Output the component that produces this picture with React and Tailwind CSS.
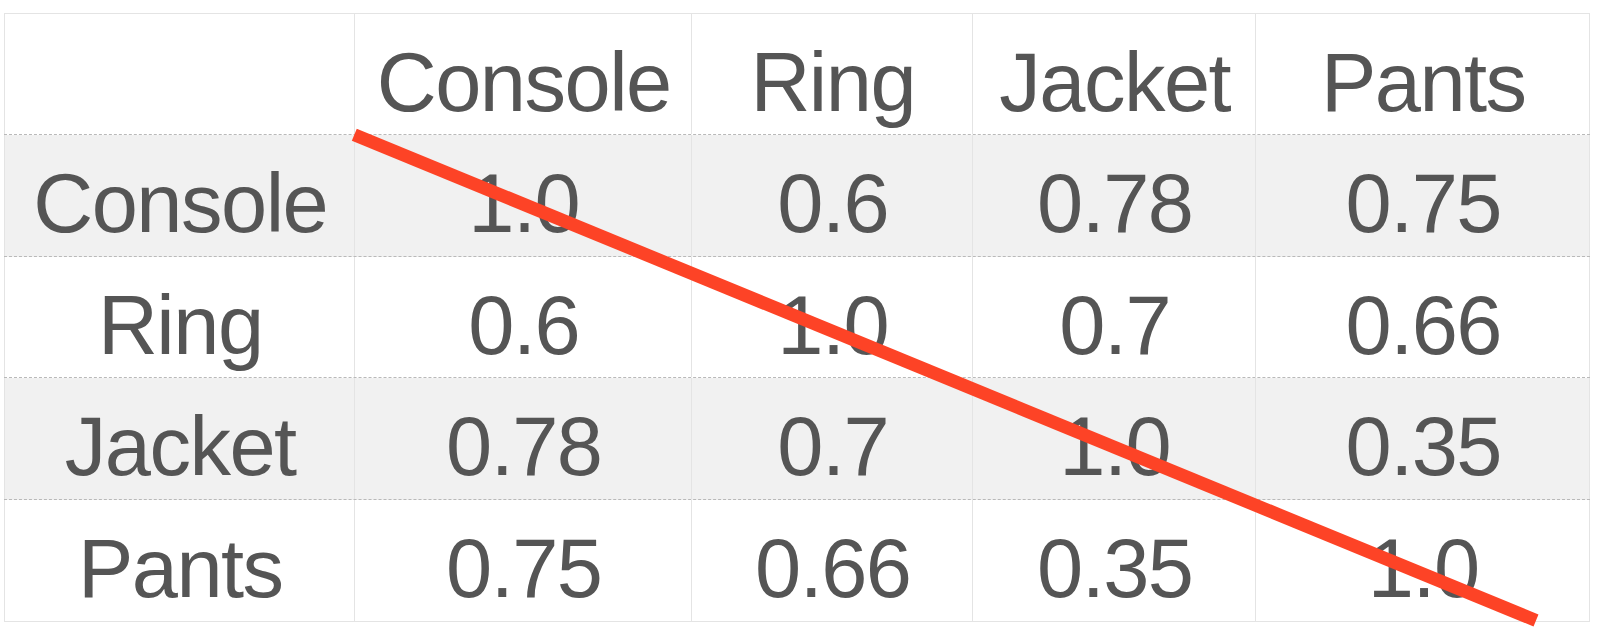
const cols = ["Console", "Ring", "Jacket", "Pants"];
const widths = ["w-[351px] border-l", "w-[337px]", "w-[281px]", "w-[283px]", "w-[334px]"];

const rows = [
  { label: "", cells: cols, h: "h-[121px]", bg: "bg-white" },
  { label: "Console", cells: ["1.0", "0.6", "0.78", "0.75"], h: "h-[122px]", bg: "bg-[#f1f1f1]" },
  { label: "Ring", cells: ["0.6", "1.0", "0.7", "0.66"], h: "h-[121px]", bg: "bg-white" },
  { label: "Jacket", cells: ["0.78", "0.7", "1.0", "0.35"], h: "h-[122px]", bg: "bg-[#f1f1f1]" },
  { label: "Pants", cells: ["0.75", "0.66", "0.35", "1.0"], h: "h-[122px]", bg: "bg-white" },
];

function Cell({ text, width }) {
  return (
    <div
      className={`${width} h-full shrink-0 border-r border-[#e4e4e4] flex justify-center items-start pt-[27px] pl-[1.5px]`}
    >
      <span className="text-[83px] leading-[83px] tracking-[-1.5px] text-[#555555]">
        {text}
      </span>
    </div>
  );
}

export default function App() {
  return (
    <div
      className="relative w-[1600px] h-[631px] bg-white overflow-hidden"
      style={{ fontFamily: '"Liberation Sans", Arial, sans-serif' }}
    >
      <div className="ml-[4px] pt-[13px]">
        <div className="w-[1586px] border-t border-[#e4e4e4]">
          {rows.map((row, i) => (
            <div
              key={i}
              className={`${row.h} ${row.bg} flex box-border border-b ${
                i === rows.length - 1
                  ? "border-solid border-[#e4e4e4]"
                  : "border-dashed border-[#b9b9b9]"
              }`}
            >
              <Cell text={row.label} width={widths[0]} />
              {row.cells.map((c, j) => (
                <Cell key={j} text={c} width={widths[j + 1]} />
              ))}
            </div>
          ))}
        </div>
      </div>

      <svg
        className="absolute inset-0 pointer-events-none"
        width="1600"
        height="631"
        viewBox="0 0 1600 631"
      >
        <line
          x1="354.3"
          y1="134.7"
          x2="1536"
          y2="620.5"
          stroke="#fd4326"
          strokeWidth="13"
        />
      </svg>
    </div>
  );
}
